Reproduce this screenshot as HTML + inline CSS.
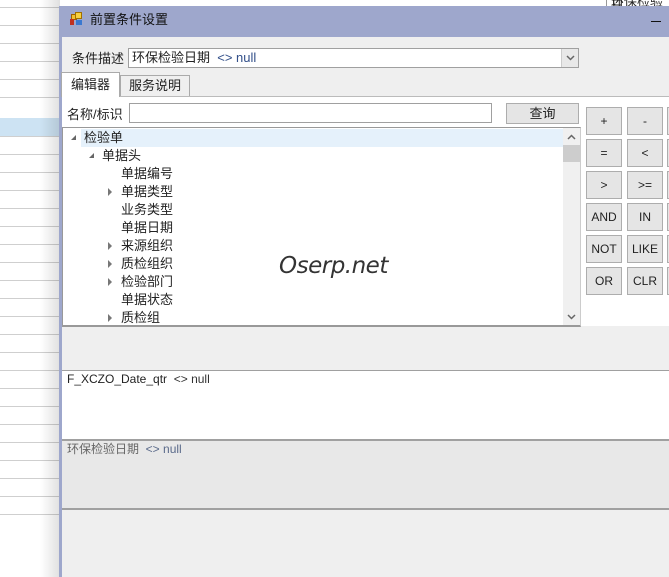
<!DOCTYPE html>
<html><head><meta charset="utf-8"><style>
*{margin:0;padding:0;box-sizing:border-box}
body{width:669px;height:577px;overflow:hidden;position:relative;background:#fff;font-family:"Liberation Sans","Noto Sans CJK SC",sans-serif;font-size:12px;color:#222}
.a{position:absolute}
.ln{position:absolute;left:0;width:60px;height:1px;background:#cfcfcf}
.btn{position:absolute;width:36px;height:28px;border:1px solid #adadad;background:#e5e5e5;text-align:center;line-height:26px;font-size:12px;color:#222}
.tr{position:absolute;font-size:13px;line-height:18px;color:#222}
.tri{position:absolute;width:0;height:0}
.c{border-top:4px solid transparent;border-bottom:4px solid transparent;border-left:4px solid #777}
.o{border-left:5px solid transparent;border-bottom:5px solid #666}
</style></head><body>
<div class="ln" style="top:7px"></div><div class="ln" style="top:25px"></div><div class="ln" style="top:43px"></div><div class="ln" style="top:61px"></div><div class="ln" style="top:79px"></div><div class="ln" style="top:97px"></div>
<div class="a" style="left:0;top:118px;width:60px;height:18px;background:#cde3f3"></div>
<div class="ln" style="top:136px"></div><div class="ln" style="top:154px"></div><div class="ln" style="top:172px"></div><div class="ln" style="top:190px"></div><div class="ln" style="top:208px"></div><div class="ln" style="top:226px"></div><div class="ln" style="top:244px"></div><div class="ln" style="top:262px"></div><div class="ln" style="top:280px"></div><div class="ln" style="top:298px"></div><div class="ln" style="top:316px"></div><div class="ln" style="top:334px"></div><div class="ln" style="top:352px"></div><div class="ln" style="top:370px"></div><div class="ln" style="top:388px"></div><div class="ln" style="top:406px"></div><div class="ln" style="top:424px"></div><div class="ln" style="top:442px"></div><div class="ln" style="top:460px"></div><div class="ln" style="top:478px"></div><div class="ln" style="top:496px"></div><div class="ln" style="top:514px"></div>
<div class="a" style="left:40px;top:0;width:20px;height:577px;background:linear-gradient(to right,rgba(0,0,0,0),rgba(0,0,0,0.12))"></div>
<div class="a" style="left:606px;top:0;width:63px;height:6px;border-left:1px solid #999;font-size:13px;line-height:4px;overflow:hidden;color:#222;padding-left:4px">环保检验日</div>
<div class="a" style="left:59px;top:6px;width:610px;height:571px;background:#efefef;border-left:3px solid #9ea7cc"></div>
<div class="a" style="left:59px;top:6px;width:610px;height:31px;background:#9ea7cc"></div>
<div class="a" style="left:71px;top:14px;width:6px;height:6px;background:#f0c030;border:1px solid #a06000"></div>
<div class="a" style="left:75px;top:12px;width:7px;height:7px;background:#f6d040;border:1px solid #a07000"></div>
<div class="a" style="left:70px;top:19px;width:4px;height:6px;background:#c03020"></div>
<div class="a" style="left:76px;top:20px;width:6px;height:5px;background:#3a78d0"></div>
<div class="a" style="left:90px;top:11px;font-size:13px;line-height:18px;color:#111">前置条件设置</div>
<div class="a" style="left:651px;top:21px;width:10px;height:1px;background:#111"></div>
<div class="a" style="left:72px;top:50px;font-size:13px;line-height:18px">条件描述</div>
<div class="a" style="left:128px;top:48px;width:451px;height:20px;background:#fff;border:1px solid #a0a0a0;font-size:13px;line-height:18px;padding-left:3px">环保检验日期 &nbsp;<span style="color:#33508a">&lt;&gt; null</span></div>
<div class="a" style="left:561px;top:49px;width:17px;height:18px;background:#e8e8e8;border-left:1px solid #ccc"><svg width="17" height="18"><path d="M5 7l3.5 3.5L12 7" fill="none" stroke="#666" stroke-width="1.5"/></svg></div>
<div class="a" style="left:62px;top:96px;width:607px;height:230px;background:#fff;border-top:1px solid #bbb"></div>
<div class="a" style="left:61px;top:72px;width:59px;height:25px;background:#fff;border:1px solid #aaa;border-bottom:none;font-size:13px;line-height:24px;text-align:center">编辑器</div>
<div class="a" style="left:120px;top:75px;width:70px;height:21px;background:#efefef;border:1px solid #aaa;border-bottom:none;font-size:13px;line-height:20px;text-align:center">服务说明</div>
<div class="a" style="left:67px;top:106px;font-size:13px;line-height:18px">名称/标识</div>
<div class="a" style="left:129px;top:103px;width:363px;height:20px;border:1px solid #a0a0a0;background:#fff"></div>
<div class="a" style="left:506px;top:103px;width:73px;height:21px;border:1px solid #adadad;background:#e5e5e5;text-align:center;font-size:13px;line-height:19px">查询</div>
<div class="a" style="left:62px;top:127px;width:519px;height:200px;border:1px solid #999;border-right:1px solid #ccc;border-bottom:2px solid #999;background:#fff"></div>
<div class="a" style="left:81px;top:129px;width:482px;height:18px;background:#e5f1fb"></div>
<div class="a" style="left:563px;top:128px;width:17px;height:197px;background:#f0f0f0"></div>
<div class="a" style="left:563px;top:145px;width:17px;height:17px;background:#cdcdcd"></div>
<svg class="a" style="left:563px;top:129px" width="17" height="16"><path d="M5 10l3.5-3.5L12 10" fill="none" stroke="#666" stroke-width="1.5"/></svg>
<svg class="a" style="left:563px;top:309px" width="17" height="16"><path d="M5 6l3.5 3.5L12 6" fill="none" stroke="#666" stroke-width="1.5"/></svg>
<div class="tri o" style="left:71px;top:135px"></div><div class="tr" style="left:84px;top:129px">检验单</div>
<div class="tri o" style="left:89px;top:153px"></div><div class="tr" style="left:102px;top:147px">单据头</div>
<div class="tr" style="left:121px;top:165px">单据编号</div>
<div class="tri c" style="left:108px;top:188px"></div><div class="tr" style="left:121px;top:183px">单据类型</div>
<div class="tr" style="left:121px;top:201px">业务类型</div>
<div class="tr" style="left:121px;top:219px">单据日期</div>
<div class="tri c" style="left:108px;top:242px"></div><div class="tr" style="left:121px;top:237px">来源组织</div>
<div class="tri c" style="left:108px;top:260px"></div><div class="tr" style="left:121px;top:255px">质检组织</div>
<div class="tri c" style="left:108px;top:278px"></div><div class="tr" style="left:121px;top:273px">检验部门</div>
<div class="tr" style="left:121px;top:291px">单据状态</div>
<div class="tri c" style="left:108px;top:314px"></div><div class="tr" style="left:121px;top:309px">质检组</div>
<div class="a" style="left:279px;top:253px;font-size:23px;font-style:italic;color:#333;font-family:'DejaVu Sans',sans-serif;letter-spacing:-0.5px">Oserp.net</div>
<div class="btn" style="left:586px;top:107px">+</div><div class="btn" style="left:627px;top:107px">-</div><div class="btn" style="left:667px;top:107px"></div>
<div class="btn" style="left:586px;top:139px">=</div><div class="btn" style="left:627px;top:139px">&lt;</div><div class="btn" style="left:667px;top:139px"></div>
<div class="btn" style="left:586px;top:171px">&gt;</div><div class="btn" style="left:627px;top:171px">&gt;=</div><div class="btn" style="left:667px;top:171px"></div>
<div class="btn" style="left:586px;top:203px">AND</div><div class="btn" style="left:627px;top:203px">IN</div><div class="btn" style="left:667px;top:203px"></div>
<div class="btn" style="left:586px;top:235px">NOT</div><div class="btn" style="left:627px;top:235px">LIKE</div><div class="btn" style="left:667px;top:235px"></div>
<div class="btn" style="left:586px;top:267px">OR</div><div class="btn" style="left:627px;top:267px">CLR</div><div class="btn" style="left:667px;top:267px"></div>
<div class="a" style="left:62px;top:328px;width:607px;height:42px;background:#efefef"></div>
<div class="a" style="left:62px;top:370px;width:607px;height:70px;background:#fff;border-top:1px solid #a0a0a0;font-size:12px;line-height:15px;padding:1px 5px">F_XCZO_Date_qtr &nbsp;<span style="color:#333">&lt;&gt; null</span></div>
<div class="a" style="left:62px;top:439px;width:607px;height:71px;background:#e8e8e8;border-top:2px solid #a0a0a0;border-bottom:2px solid #a0a0a0;font-size:12px;line-height:15px;padding:1px 5px;color:#666">环保检验日期 &nbsp;<span style="color:#5a6a8a">&lt;&gt; null</span></div>
</body></html>
